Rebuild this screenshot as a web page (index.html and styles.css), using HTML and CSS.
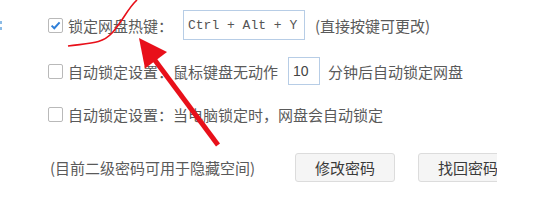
FILE: index.html
```html
<!DOCTYPE html>
<html lang="zh-CN">
<head>
<meta charset="utf-8">
<link rel="stylesheet" href="styles.css">
</head>
<body>
<div class="edge-mark"><i></i><i></i></div>
<div class="panel">
  <div class="row row-1">
    <span class="cb checked"><svg width="15" height="15" viewBox="0 0 15 15"><path d="M3.6 7.6 L6.3 10.2 L11.6 4.4" fill="none" stroke="#2f7fd8" stroke-width="2"/></svg></span>
    <span class="label">锁定网盘热键：</span>
    <span class="field hotkey">Ctrl + Alt + Y</span>
    <span class="label hint">(直接按键可更改)</span>
  </div>
  <div class="row row-2">
    <span class="cb"></span>
    <span class="label">自动锁定设置：鼠标键盘无动作</span>
    <span class="field minutes">10</span>
    <span class="label after">分钟后自动锁定网盘</span>
  </div>
  <div class="row row-3">
    <span class="cb"></span>
    <span class="label">自动锁定设置：当电脑锁定时，网盘会自动锁定</span>
  </div>
  <div class="row row-4">
    <span class="label note">(目前二级密码可用于隐藏空间)</span>
    <span class="btn first">修改密码</span>
    <span class="btn second">找回密码</span>
  </div>
</div>
<svg class="annot" width="545" height="204" viewBox="0 0 545 204">
  <path d="M68 46 C 90 43, 102 44, 112 33 S 128 8, 137 0" fill="none" stroke="#e8101a" stroke-width="1.6"/>
  <line x1="218" y1="145" x2="154" y2="59" stroke="#e8101a" stroke-width="5"/>
  <polygon points="139,38 167,52 145,68.5" fill="#e8101a"/>
</svg>
</body>
</html>
```
FILE: styles.css
```css
html, body {
  margin: 0;
  padding: 0;
  background: #ffffff;
}
body {
  position: relative;
  width: 545px;
  height: 204px;
  overflow: hidden;
  font-family: "Noto Sans CJK SC", "Noto Sans", sans-serif;
  color: #5a5a5a;
}
.panel {
  width: 497px;
  overflow: hidden;
  padding-top: 10px;
}
.row {
  display: flex;
  align-items: center;
  padding-left: 48px;
  white-space: nowrap;
}
.row-1 { height: 30px; }
.row-2 { height: 28px; margin-top: 17px; }
.row-3 { height: 28px; margin-top: 15px; }
.row-4 { height: 29px; margin-top: 25px; padding-left: 50px; }
.cb {
  box-sizing: border-box;
  flex: none;
  width: 15px;
  height: 15px;
  border: 1px solid #b9b9b9;
  border-radius: 2px;
  background: #fff;
  margin-right: 5px;
  position: relative;
}
.cb svg {
  position: absolute;
  left: -1px;
  top: -1px;
}
.label {
  font-size: 15px;
  line-height: 1;
  flex: none;
}
.field {
  box-sizing: border-box;
  flex: none;
  display: flex;
  align-items: center;
  border: 1px solid #b7cde6;
  background: #fff;
  color: #333;
}
.hotkey {
  width: 122px;
  height: 30px;
  margin-left: 10px;
  padding-left: 4px;
  font-family: "Liberation Mono", "DejaVu Sans Mono", monospace;
  font-size: 13px;
  color: #555;
}
.minutes {
  width: 32px;
  height: 28px;
  margin-left: 10px;
  padding-left: 4px;
  font-family: "Liberation Sans", Arial, sans-serif;
  font-size: 14px;
  color: #444;
}
.hint { margin-left: 10px; }
.after { margin-left: 8px; }
.note { width: 245px; }
.btn {
  box-sizing: border-box;
  flex: none;
  display: flex;
  align-items: center;
  justify-content: center;
  width: 100px;
  height: 29px;
  border: 1px solid #dcdcdc;
  border-radius: 3px;
  background: #f5f5f5;
  font-size: 15px;
  color: #3a3a3a;
}
.btn.second { margin-left: 23px; }
.edge-mark {
  position: absolute;
  left: 0;
  top: 21px;
  width: 2px;
  display: flex;
  flex-direction: column;
  gap: 3px;
}
.edge-mark i {
  display: block;
  width: 2px;
  height: 3px;
  background: #8bbbe6;
}
.annot {
  position: absolute;
  left: 0;
  top: 0;
  pointer-events: none;
}
```
